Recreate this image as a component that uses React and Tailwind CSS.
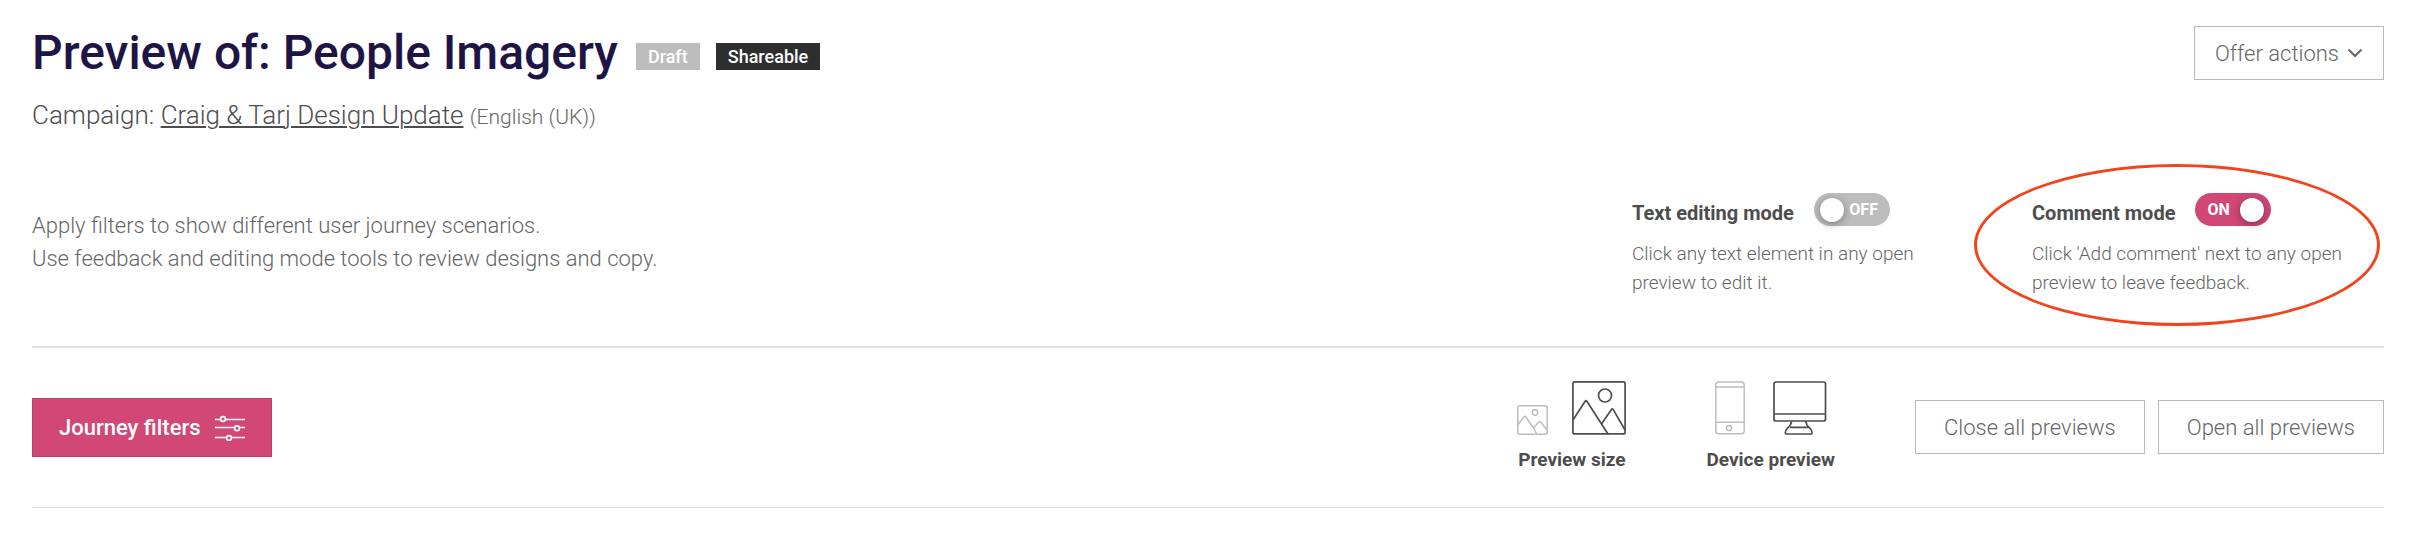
import { useState } from "react";

function Badge({ className, children }) {
  return (
    <span className={`px-3 text-[18px] leading-[27px] font-medium text-white ${className}`}>
      {children}
    </span>
  );
}

function OutlineButton({ className, children }) {
  return (
    <button
      type="button"
      className={`flex h-[54px] items-center border border-[#b8b8b8] bg-white text-[22px] font-light text-[#666] ${className}`}
    >
      {children}
    </button>
  );
}

function ModeToggle({ id, label, checked, onChange, children }) {
  return (
    <div>
      <div className="flex h-[34px] items-start gap-5">
        <label htmlFor={id} className="pt-1 text-[20px] leading-8 font-bold text-[#4d4d4d]">
          {label}
        </label>
        <label
          htmlFor={id}
          className="flex h-[33px] w-[76px] cursor-pointer items-center justify-between rounded-full bg-[#bdbdbd] pr-3 pl-[6px] text-[16px] font-bold text-white has-checked:flex-row-reverse has-checked:bg-[#d14775] has-checked:pr-[7px] has-checked:pl-3"
        >
          <input
            id={id}
            type="checkbox"
            role="switch"
            checked={checked}
            onChange={(e) => onChange(e.target.checked)}
            className="h-6 w-6 cursor-pointer appearance-none rounded-full bg-white shadow-[0_2px_8px_rgba(0,0,0,0.35)]"
          />
          <span>{checked ? "ON" : "OFF"}</span>
        </label>
      </div>
      <p className="mt-3 text-[19px] leading-[29px] font-light text-[#666]">{children}</p>
    </div>
  );
}

function ChevronIcon() {
  return (
    <svg viewBox="0 0 16 10" className="h-[10px] w-4" fill="none" stroke="currentColor" strokeWidth="2">
      <path d="M1.5 1.5 8 8l6.5-6.5" />
    </svg>
  );
}

function FiltersIcon() {
  return (
    <svg viewBox="0 0 30 26" className="h-[26px] w-[30px]" fill="none" stroke="currentColor" strokeWidth="1.7">
      <path d="M0 4.5h5M10.5 4.5H30M0 12.5h19M24.5 12.5H30M0 22.5h11.5M17 22.5h13" />
      <circle cx="8" cy="4" r="2.4" />
      <circle cx="22" cy="13.3" r="2.4" />
      <circle cx="14" cy="23" r="2.4" />
    </svg>
  );
}

function SmallImageIcon() {
  return (
    <svg viewBox="0 0 31 30" className="h-[30px] w-[31px]" fill="none" stroke="currentColor" strokeWidth="1.5">
      <rect x="0.8" y="0.8" width="29.4" height="28.4" rx="2" />
      <circle cx="18" cy="7.5" r="2.7" />
      <path d="M1 19.5 7.2 11.8q.8-.9 1.6 0L16.5 23 19.8 29M16.5 23 22 16.8q.8-.8 1.5 0L30 25" />
    </svg>
  );
}

function LargeImageIcon() {
  return (
    <svg viewBox="0 0 54 54" className="h-[54px] w-[54px]" fill="none" stroke="currentColor" strokeWidth="1.7">
      <rect x="0.9" y="0.9" width="52.2" height="52" rx="2" />
      <circle cx="33" cy="14.5" r="6.5" />
      <path d="M1 39 13.3 20q.7-.9 1.4 0L36 53M29.5 43 39.6 28.2q.7-.9 1.4 0L53 49" />
    </svg>
  );
}

function PhoneIcon() {
  return (
    <svg viewBox="0 0 30 54" className="h-[54px] w-[30px]" fill="none" stroke="currentColor" strokeWidth="1.5">
      <rect x="0.8" y="1" width="28.4" height="51.8" rx="3" />
      <path d="M1 6h28M1 41.2h28" />
      <circle cx="14" cy="47" r="2.6" />
    </svg>
  );
}

function DesktopIcon() {
  return (
    <svg viewBox="0 0 54 54" className="h-[54px] w-[54px]" fill="none" stroke="currentColor" strokeWidth="1.7">
      <rect x="1" y="1" width="51.5" height="39" rx="2" />
      <path d="M1 33h51.5M18.7 40q-.6 4.5-4 7-2.5 2.5-2.3 5 0 1 1 1h24.6q1 0 1-1 .2-2.5-2.3-5-3.4-2.5-4-7M17 46.3h19" />
    </svg>
  );
}

function IconOption({ label, active, children }) {
  return (
    <button
      type="button"
      aria-label={label}
      aria-pressed={active}
      className={active ? "text-[#4d4d4d]" : "text-[#bdbdbd]"}
    >
      {children}
    </button>
  );
}

export default function App() {
  const [textEditing, setTextEditing] = useState(false);
  const [commenting, setCommenting] = useState(true);

  return (
    <main className="bg-white pr-7 pl-8 font-[Roboto,sans-serif] text-[#4d4d4d]">
      <header className="flex items-start justify-between pt-[26px]">
        <div>
          <div className="flex items-end gap-[18px]">
            <h1 className="text-[48px] leading-[54px] font-medium text-[#1e1446]">
              Preview of: People Imagery
            </h1>
            <div className="flex gap-4 pb-[10px]">
              <Badge className="bg-[#bdbdbd]">Draft</Badge>
              <Badge className="bg-[#2e2e2e]">Shareable</Badge>
            </div>
          </div>
          <p className="mt-[19px] text-[26px] leading-8 font-light">
            Campaign:{" "}
            <a href="#campaign" className="underline decoration-2 underline-offset-2">
              Craig &amp; Tarj Design Update
            </a>{" "}
            <span className="text-[21px] text-[#666]">(English (UK))</span>
          </p>
        </div>
        <OutlineButton className="gap-2 px-5">
          Offer actions
          <ChevronIcon />
        </OutlineButton>
      </header>

      <section className="flex items-start justify-between border-b-2 border-[#e0e0e0] pt-[60px] pb-[49px]">
        <p className="pt-4 text-[22px] leading-[33px] font-light text-[#666]">
          Apply filters to show different user journey scenarios.
          <br />
          Use feedback and editing mode tools to review designs and copy.
        </p>
        <div className="flex pr-[38px]">
          <div className="w-[400px]">
            <ModeToggle
              id="text-editing"
              label="Text editing mode"
              checked={textEditing}
              onChange={setTextEditing}
            >
              Click any text element in any open
              <br />
              preview to edit it.
            </ModeToggle>
          </div>
          <div className="relative w-[314px] whitespace-nowrap">
            <ModeToggle
              id="comment-mode"
              label="Comment mode"
              checked={commenting}
              onChange={setCommenting}
            >
              Click 'Add comment' next to any open
              <br />
              preview to leave feedback.
            </ModeToggle>
            {/* highlight ring drawn over the comment mode switch */}
            <div className="pointer-events-none absolute -top-[29px] -left-[58px] h-[162px] w-[406px] rounded-[50%] border-3 border-[#f4431a]" />
          </div>
        </div>
      </section>

      <section className="flex items-start justify-between border-b border-[#e0e0e0] pt-[33px] pb-[31px]">
        <button
          type="button"
          className="mt-[17px] flex h-[59px] items-center gap-[14px] border border-[#c93a69] bg-[#d14775] px-[26px] text-[22px] font-medium text-white"
        >
          Journey filters
          <FiltersIcon />
        </button>
        <div className="flex items-start">
          <div className="mr-20 flex flex-col items-center gap-[9px]">
            <div className="flex items-end gap-6">
              <IconOption label="Small preview">
                <SmallImageIcon />
              </IconOption>
              <IconOption label="Large preview" active>
                <LargeImageIcon />
              </IconOption>
            </div>
            <span className="text-[19px] leading-8 font-bold">Preview size</span>
          </div>
          <div className="mr-20 flex flex-col items-center gap-[9px]">
            <div className="flex items-end gap-7">
              <IconOption label="Mobile preview">
                <PhoneIcon />
              </IconOption>
              <IconOption label="Desktop preview" active>
                <DesktopIcon />
              </IconOption>
            </div>
            <span className="text-[19px] leading-8 font-bold">Device preview</span>
          </div>
          <div className="mt-[19px] flex gap-[13px]">
            <OutlineButton className="px-7">Close all previews</OutlineButton>
            <OutlineButton className="px-7">Open all previews</OutlineButton>
          </div>
        </div>
      </section>
    </main>
  );
}
